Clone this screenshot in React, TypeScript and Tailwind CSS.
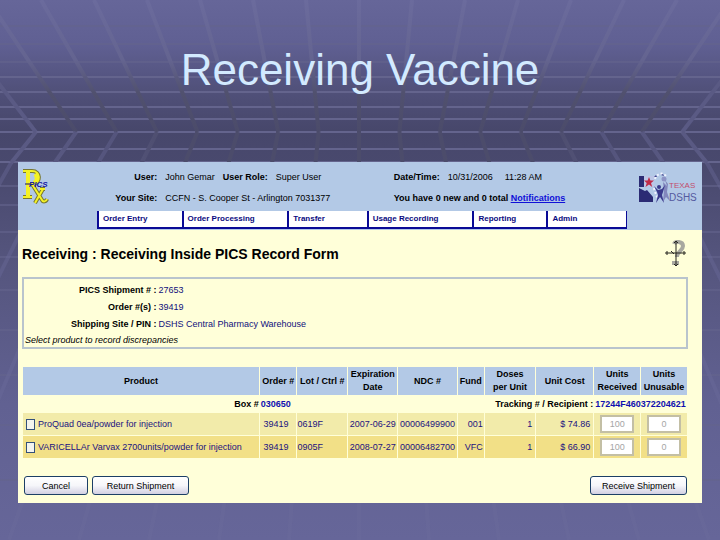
import React from 'react';

const menuItems = [
  { label: 'Order Entry', width: 'w-[16%]' },
  { label: 'Order Processing', width: 'w-[20%]' },
  { label: 'Transfer', width: 'w-[15%]' },
  { label: 'Usage Recording', width: 'w-[20%]' },
  { label: 'Reporting', width: 'w-[14%]' },
  { label: 'Admin', width: 'w-[15%]' },
];

const columns = [
  { label: 'Product', width: 'w-[36%]' },
  { label: 'Order #', width: 'w-[5.6%]' },
  { label: 'Lot / Ctrl #', width: 'w-[7.6%]' },
  { label: 'Expiration Date', width: 'w-[7.5%]' },
  { label: 'NDC #', width: 'w-[8.9%]' },
  { label: 'Fund', width: 'w-[4%]' },
  { label: 'Doses per\u00a0Unit', width: 'w-[7.7%]' },
  { label: 'Unit Cost', width: 'w-[8.7%]' },
  { label: 'Units Received', width: 'w-[7%]' },
  { label: 'Units Unusable', width: 'w-[7%]' },
];

const products = [
  {
    id: 'proquad',
    name: 'ProQuad 0ea/powder for injection',
    order: '39419',
    lot: '0619F',
    expires: '2007-06-29',
    ndc: '00006499900',
    fund: '001',
    doses: '1',
    cost: '$ 74.86',
    received: '100',
    unusable: '0',
    row: 'bg-[#f2ebaa]',
  },
  {
    id: 'varivax',
    name: 'VARICELLAr Varvax 2700units/powder for injection',
    order: '39419',
    lot: '0905F',
    expires: '2008-07-27',
    ndc: '00006482700',
    fund: 'VFC',
    doses: '1',
    cost: '$ 66.90',
    received: '100',
    unusable: '0',
    row: 'bg-[#f2e087]',
  },
];

const gridRows = [26, 44, 62, 77, 92, 107, 119, 132, 149, 162, 186, 205, 232, 257, 290, 330, 375, 425, 480];
const gridCols = Array.from({ length: 29 }, (_, i) => i - 14);

const SlideBackground = () => (
  <svg
    className="absolute inset-0 h-full w-full"
    viewBox="0 0 720 540"
    preserveAspectRatio="none"
    aria-hidden="true"
  >
    <defs>
      <linearGradient id="slide" x1="0" y1="0" x2="0" y2="1">
        <stop offset="0" stopColor="#666699" />
        <stop offset="0.08" stopColor="#606093" />
        <stop offset="0.17" stopColor="#505079" />
        <stop offset="0.24" stopColor="#47476b" />
        <stop offset="0.31" stopColor="#49496e" />
        <stop offset="0.5" stopColor="#56567f" />
        <stop offset="0.75" stopColor="#616192" />
        <stop offset="1" stopColor="#666699" />
      </linearGradient>
      <linearGradient id="beam" gradientUnits="userSpaceOnUse" x1="0" y1="0" x2="720" y2="0">
        <stop offset="0" stopColor="#5b5b85" />
        <stop offset="0.17" stopColor="#54547c" />
        <stop offset="0.24" stopColor="#4c4c6b" />
        <stop offset="0.76" stopColor="#4c4c6b" />
        <stop offset="0.83" stopColor="#54547c" />
        <stop offset="1" stopColor="#5b5b85" />
      </linearGradient>
      <linearGradient id="topBeam" gradientUnits="userSpaceOnUse" x1="0" y1="0" x2="0" y2="132">
        <stop offset="0" stopColor="#6b6b9d" />
        <stop offset="0.45" stopColor="#646490" />
        <stop offset="0.7" stopColor="#51516f" />
        <stop offset="1" stopColor="#4b4b6a" />
      </linearGradient>
    </defs>
    <rect width="720" height="540" fill="url(#slide)" />
    {gridRows.map((y) => (
      <path key={y} d={`M0 ${y}H720`} stroke="#64648d" strokeWidth="2" opacity={y < 75 || y > 180 ? 0.6 : 1} />
    ))}
    {gridCols.map((i) => (
      <g key={i} fill="none" strokeWidth="4">
        <path d={`M${359 + i * 53} 0L${359 + i * 40.4} 132`} stroke={Math.abs(i) > 7 ? '#5a5a84' : 'url(#topBeam)'} />
        <path d={`M${359 + i * 40.4} 132L${359 + i * 43.5} 163`} stroke="url(#beam)" />
        <path d={`M${359 + i * 43.5} 163L${359 + i * 70} 540`} stroke="#6b6b9c" opacity="0.4" />
      </g>
    ))}
  </svg>
);

const PicsLogo = () => (
  <svg className="h-9 w-7 shrink-0" viewBox="0 0 28 36" role="img" aria-label="PICS">
    <g fill="none" strokeLinejoin="round">
      <path d="M1 2H10C19 2 19 14 11 15H7M6 2V28M1 28H10M10 15L20 31C21 33 24 33 25 30M21 20L13 34M18 20H23" stroke="#77772f" strokeWidth="4" />
      <path d="M1 2H10C19 2 19 14 11 15H7M6 2V28M1 28H10M10 15L20 31C21 33 24 33 25 30M21 20L13 34M18 20H23" stroke="#f5f224" strokeWidth="2" />
      <path d="M6 2V28M13 5C16 8 15 12 12 14" stroke="#f5f224" strokeWidth="4" />
    </g>
    <path d="M3 15H8" stroke="#101060" />
    <text x="7" y="18" className="fill-[#1414a0] text-[8px] font-bold italic">PICS</text>
  </svg>
);

const DshsLogo = () => (
  <svg className="h-9 w-[60px] shrink-0" viewBox="0 0 60 36" role="img" aria-label="Texas DSHS">
    <path d="M1 6H6V17H1zM1 18L7 21L9 20L15 27V32H1z" fill="#2b2b74" />
    <path d="M6 6H18C15 10 16 14 18 17H6z" fill="#bcc6e6" />
    <path d="M11 7L12.400 10.500H16L13 13L14.200 17L11 14.600L7.500 17L8.700 13L6 10.500H9.600z" fill="#c02a48" />
    <path d="M17 9C19 3 25 2 28 6M16 18C17 23 19 26 20 30" fill="none" stroke="#f2f4ff" strokeWidth="2" strokeDasharray="2 2" />
    <circle cx="26" cy="9" r="2.500" fill="#8e94c6" />
    <path d="M23 5L25 4L26 6zM16 7L18 5L19 7z" fill="#44448c" />
    <path d="M25 12L29 16L27 10L30 14L29 22L32 31L28 27L25 32L26 20z" fill="#8287bd" />
    <circle cx="21" cy="17" r="2" fill="#3a3a8c" />
    <path d="M16 16L20 20L24 19L27 15L25 22L24 25L26 33L22 27L18 33L20 25L19 22z" fill="#3a3a8c" />
    <text x="31" y="18" className="fill-[#c24e6c] text-[8px]">TEXAS</text>
    <text x="31" y="31" className="fill-[#555aa0] text-[10px]">DSHS</text>
  </svg>
);

const HelpIcon = () => (
  <svg className="h-7 w-6 shrink-0" viewBox="0 0 24 28" role="img" aria-label="Help">
    <path d="M10 4C11 1 19 1 19 6C19 11 13 11 13 17M8 23H15" fill="none" stroke="#a8a8a0" strokeWidth="4" />
    <path d="M12 1V26M1 13H22M10 3L12 1L14 3M10 24L12 26L14 24M3 11V15M20 11V15M7 11L10 14" fill="none" stroke="#25251f" />
  </svg>
);

const ActionButton = ({ children, className }: { children: React.ReactNode; className: string }) => (
  <button
    type="button"
    className={`h-[19px] rounded-[3px] border border-[#1c3f66] bg-gradient-to-b from-white via-[#f6f6fa] to-[#d2d0e2] text-[9px] leading-4 text-black ${className}`}
  >
    {children}
  </button>
);

const details = [
  { label: 'PICS Shipment # :', value: '27653' },
  { label: 'Order #(s) :', value: '39419' },
  { label: 'Shipping Site / PIN :', value: 'DSHS Central Pharmacy Warehouse' },
];

const App = () => {
  return (
    <div className="relative min-h-screen bg-[#666699] font-['Liberation_Sans',Arial,sans-serif] text-[9px] leading-4 text-black">
      <SlideBackground />

      <div className="relative px-[18px] pb-9">
        <h1 className="pt-[46px] pb-[68px] text-center text-[44px] leading-12 text-[#d3eaff]">
          Receiving Vaccine
        </h1>

        <main className="bg-[#ffffd9]">
          {/* Account bar */}
          <header className="bg-[#b3c9e6]">
            <div className="flex h-[49px] items-start px-1 pt-1">
              <div className="flex w-[20%] justify-between pt-[3px]">
                <PicsLogo />
                <div className="flex flex-col gap-[5px] text-right font-bold">
                  <span>User:</span>
                  <span>Your Site:</span>
                </div>
              </div>
              <div className="flex w-[35%] flex-col gap-[5px] pt-[3px] pl-2">
                <div className="flex gap-2">
                  <span>John Gemar</span>
                  <span className="flex gap-2"><b>User Role:</b>Super User</span>
                </div>
                <span>CCFN - S. Cooper St - Arlington 7031377</span>
              </div>
              <div className="flex flex-1 flex-col gap-[5px] pt-[3px]">
                <div className="flex gap-2">
                  <b>Date/Time:</b>
                  <span>10/31/2006</span>
                  <span className="pl-1">11:28 AM</span>
                </div>
                <b>
                  You have 0 new and 0 total{' '}
                  <a href="#notifications" className="text-[#1010d8] underline">Notifications</a>
                </b>
              </div>
              <div className="pt-1">
                <DshsLogo />
              </div>
            </div>
            <div className="pr-[11%] pb-px pl-[79px]">
              <nav className="flex border-r border-b-2 border-[#0a0a96] bg-white">
                {menuItems.map((item) => (
                  <a
                    key={item.label}
                    href="#menu"
                    className={`border-l-2 border-[#0a0a96] pl-1 text-[8px] leading-4 font-bold text-[#0a0a80] ${item.width}`}
                  >
                    {item.label}
                  </a>
                ))}
              </nav>
            </div>
          </header>

          <div className="pr-[14px] pl-1">
            <div className="flex items-center justify-between pt-[10px] pb-[9px]">
              <h2 className="text-[14px] leading-7 font-bold">Receiving : Receiving Inside PICS Record Form</h2>
              <HelpIcon />
            </div>

            {/* Shipment details */}
            <section className="border-2 border-[#b9c4cd] pt-[3px]">
              <dl>
                {details.map((item) => (
                  <div key={item.label} className="flex gap-[2px] leading-[17px]">
                    <dt className="w-[20%] text-right font-bold">{item.label}</dt>
                    <dd className="text-[#10107c]">{item.value}</dd>
                  </div>
                ))}
              </dl>
              <p className="pl-px leading-[14px] italic">Select product to record discrepancies</p>
            </section>

            <table className="mt-[17px] w-full table-fixed border-separate border-spacing-px">
              <thead>
                <tr className="h-7 bg-[#b3c9e6]">
                  {columns.map((column) => (
                    <th key={column.label} scope="col" className={`p-0 leading-[13px] ${column.width}`}>
                      {column.label}
                    </th>
                  ))}
                </tr>
              </thead>
              <tbody>
                <tr className="h-4 font-bold">
                  <td className="p-0 text-right">Box #</td>
                  <td className="p-0 pl-px text-[#1010b0]">030650</td>
                  <td colSpan={6} className="p-0 text-right">Tracking # / Recipient :</td>
                  <td colSpan={2} className="p-0 pl-px text-[#1010b0]">17244F460372204621</td>
                </tr>
                {products.map((product) => (
                  <tr key={product.id} className={`h-[22px] whitespace-nowrap text-[#1a1280] ${product.row}`}>
                    <td className="p-0 pl-[3px]">
                      <label className="flex items-center gap-[3px]">
                        <input type="checkbox" className="h-[11px] w-[9px] shrink-0 appearance-none border border-[#33507a] bg-[#f4f4ee]" />
                        {product.name}
                      </label>
                    </td>
                    <td className="p-0 pr-2 text-right">{product.order}</td>
                    <td className="p-0">{product.lot}</td>
                    <td className="p-0 text-center">{product.expires}</td>
                    <td className="p-0 text-center">{product.ndc}</td>
                    <td className="p-0 pr-px text-right">{product.fund}</td>
                    <td className="p-0 pr-[3px] text-right">{product.doses}</td>
                    <td className="p-0 pr-[3px] text-right">{product.cost}</td>
                    <td className="p-0 text-center">
                      <input
                        type="text"
                        disabled
                        aria-label={`Units received, ${product.name}`}
                        defaultValue={product.received}
                        className="h-[18px] w-[34px] border-2 border-[#c3bfa5] bg-white text-center align-middle text-[#a5a5a5]"
                      />
                    </td>
                    <td className="p-0 text-center">
                      <input
                        type="text"
                        disabled
                        aria-label={`Units unusable, ${product.name}`}
                        defaultValue={product.unusable}
                        className="h-[18px] w-[34px] border-2 border-[#c3bfa5] bg-white text-center align-middle text-[#a5a5a5]"
                      />
                    </td>
                  </tr>
                ))}
              </tbody>
            </table>

            <div className="flex gap-1 pt-[17px] pr-px pb-2 pl-[2px]">
              <ActionButton className="w-16">Cancel</ActionButton>
              <ActionButton className="w-[97px]">Return Shipment</ActionButton>
              <ActionButton className="ml-auto w-[97px]">Receive Shipment</ActionButton>
            </div>
          </div>
        </main>
      </div>
    </div>
  );
};

export default App;
